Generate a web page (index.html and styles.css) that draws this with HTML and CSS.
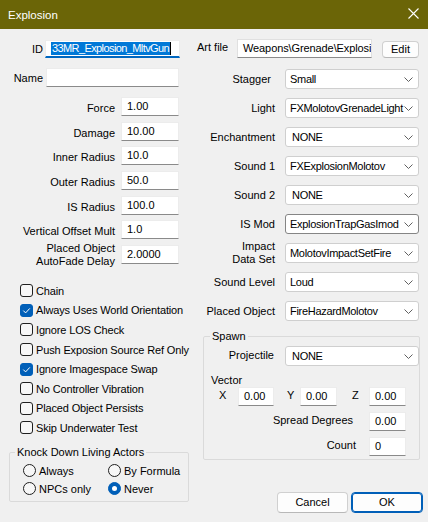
FILE: index.html
```html
<!DOCTYPE html>
<html>
<head>
<meta charset="utf-8">
<title>Explosion</title>
<link rel="stylesheet" href="styles.css">
</head>
<body>
<div class="window">
  <div class="titlebar">
    <span class="title">Explosion</span>
    <svg class="close" width="11" height="11" viewBox="0 0 11 11"><path d="M0.5 0.5 L10.5 10.5 M10.5 0.5 L0.5 10.5" stroke="#ffffff" stroke-width="1.1" fill="none"/></svg>
  </div>
  <div class="content">
    <div class="left">
      <div class="idrow">
        <span class="id-lbl">ID</span>
        <div class="tb tb-id"><span class="sel">33MR_Explosion_MltvGun</span><span class="caret"></span></div>
      </div>
      <div class="namerow">
        <span class="name-lbl">Name</span>
        <div class="tb tb-name"></div>
      </div>
      <div class="nums">
        <div class="nrow"><span class="nlbl">Force</span><div class="tb tb-num">1.00</div></div>
        <div class="nrow"><span class="nlbl">Damage</span><div class="tb tb-num">10.00</div></div>
        <div class="nrow"><span class="nlbl">Inner Radius</span><div class="tb tb-num">10.0</div></div>
        <div class="nrow"><span class="nlbl">Outer Radius</span><div class="tb tb-num">50.0</div></div>
        <div class="nrow"><span class="nlbl">IS Radius</span><div class="tb tb-num">100.0</div></div>
        <div class="nrow"><span class="nlbl">Vertical Offset Mult</span><div class="tb tb-num">1.0</div></div>
        <div class="nrow"><span class="nlbl two">Placed Object<br>AutoFade Delay</span><div class="tb tb-num">2.0000</div></div>
      </div>
      <div class="checks">
        <div class="chk"><span class="box"></span><span>Chain</span></div>
        <div class="chk"><span class="box on"><svg width="13" height="13" viewBox="0 0 13 13"><path d="M3.3 6.6 L5.6 8.9 L9.8 4.4" stroke="#fff" stroke-width="1" fill="none"/></svg></span><span>Always Uses World Orientation</span></div>
        <div class="chk"><span class="box"></span><span>Ignore LOS Check</span></div>
        <div class="chk"><span class="box"></span><span>Push Exposion Source Ref Only</span></div>
        <div class="chk"><span class="box on"><svg width="13" height="13" viewBox="0 0 13 13"><path d="M3.3 6.6 L5.6 8.9 L9.8 4.4" stroke="#fff" stroke-width="1" fill="none"/></svg></span><span>Ignore Imagespace Swap</span></div>
        <div class="chk"><span class="box"></span><span>No Controller Vibration</span></div>
        <div class="chk"><span class="box"></span><span>Placed Object Persists</span></div>
        <div class="chk"><span class="box"></span><span>Skip Underwater Test</span></div>
      </div>
      <fieldset class="grp knock">
        <legend>Knock Down Living Actors</legend>
        <div class="radios">
          <div class="rad"><span class="circ"></span><span>Always</span></div>
          <div class="rad"><span class="circ"></span><span>By Formula</span></div>
          <div class="rad"><span class="circ"></span><span>NPCs only</span></div>
          <div class="rad"><span class="circ on"></span><span>Never</span></div>
        </div>
      </fieldset>
    </div>
    <div class="right">
      <div class="artrow">
        <span class="art-lbl">Art file</span>
        <div class="tb tb-art">Weapons\Grenade\Explosion</div>
        <div class="btn btn-edit">Edit</div>
      </div>
      <div class="selects">
        <div class="srow"><span class="slbl stagger">Stagger</span><div class="dd"><span class="ddt">Small</span><svg class="chev" width="9" height="5" viewBox="0 0 9 5"><path d="M0.5 0.5 L4.5 4.5 L8.5 0.5" fill="none" stroke="#606060"/></svg></div></div>
        <div class="srow"><span class="slbl">Light</span><div class="dd"><span class="ddt">FXMolotovGrenadeLight</span><svg class="chev" width="9" height="5" viewBox="0 0 9 5"><path d="M0.5 0.5 L4.5 4.5 L8.5 0.5" fill="none" stroke="#606060"/></svg></div></div>
        <div class="srow"><span class="slbl">Enchantment</span><div class="dd"><span class="ddt pad">NONE</span><svg class="chev" width="9" height="5" viewBox="0 0 9 5"><path d="M0.5 0.5 L4.5 4.5 L8.5 0.5" fill="none" stroke="#606060"/></svg></div></div>
        <div class="srow"><span class="slbl">Sound 1</span><div class="dd"><span class="ddt">FXExplosionMolotov</span><svg class="chev" width="9" height="5" viewBox="0 0 9 5"><path d="M0.5 0.5 L4.5 4.5 L8.5 0.5" fill="none" stroke="#606060"/></svg></div></div>
        <div class="srow"><span class="slbl">Sound 2</span><div class="dd"><span class="ddt pad">NONE</span><svg class="chev" width="9" height="5" viewBox="0 0 9 5"><path d="M0.5 0.5 L4.5 4.5 L8.5 0.5" fill="none" stroke="#606060"/></svg></div></div>
        <div class="srow"><span class="slbl">IS Mod</span><div class="dd focus"><span class="ddt">ExplosionTrapGasImod</span><svg class="chev" width="9" height="5" viewBox="0 0 9 5"><path d="M0.5 0.5 L4.5 4.5 L8.5 0.5" fill="none" stroke="#606060"/></svg></div></div>
        <div class="srow"><span class="slbl two">Impact<br>Data Set</span><div class="dd"><span class="ddt">MolotovImpactSetFire</span><svg class="chev" width="9" height="5" viewBox="0 0 9 5"><path d="M0.5 0.5 L4.5 4.5 L8.5 0.5" fill="none" stroke="#606060"/></svg></div></div>
        <div class="srow"><span class="slbl">Sound Level</span><div class="dd"><span class="ddt">Loud</span><svg class="chev" width="9" height="5" viewBox="0 0 9 5"><path d="M0.5 0.5 L4.5 4.5 L8.5 0.5" fill="none" stroke="#606060"/></svg></div></div>
        <div class="srow"><span class="slbl">Placed Object</span><div class="dd"><span class="ddt">FireHazardMolotov</span><svg class="chev" width="9" height="5" viewBox="0 0 9 5"><path d="M0.5 0.5 L4.5 4.5 L8.5 0.5" fill="none" stroke="#606060"/></svg></div></div>
      </div>
      <fieldset class="grp spawn">
        <legend>Spawn</legend>
        <div class="prow"><span class="plbl">Projectile</span><div class="dd"><span class="ddt pad">NONE</span><svg class="chev" width="9" height="5" viewBox="0 0 9 5"><path d="M0.5 0.5 L4.5 4.5 L8.5 0.5" fill="none" stroke="#606060"/></svg></div></div>
        <div class="vlbl">Vector</div>
        <div class="xyz">
          <span class="ax ax-x">X</span><div class="tb tb-x">0.00</div>
          <span class="ax ax-y">Y</span><div class="tb tb-v">0.00</div>
          <span class="ax ax-z">Z</span><div class="tb tb-v">0.00</div>
        </div>
        <div class="frow spread"><span>Spread Degrees</span><div class="tb tb-v">0.00</div></div>
        <div class="frow count"><span>Count</span><div class="tb tb-v">0</div></div>
      </fieldset>
      <div class="buttons">
        <div class="btn btn-cancel">Cancel</div>
        <div class="btn btn-ok">OK</div>
      </div>
    </div>
  </div>
</div>
</body>
</html>
```
FILE: styles.css
```css
html, body {
  margin: 0;
  padding: 0;
}
body {
  width: 428px;
  height: 522px;
  overflow: hidden;
  background: #f0f0f0;
  font-family: "Liberation Sans", Arial, sans-serif;
  font-size: 11px;
  color: #000;
}
.window {
  width: 428px;
  height: 522px;
  background: #f0f0f0;
}
.titlebar {
  height: 29px;
  background: #6b6507;
  display: flex;
  align-items: center;
  justify-content: space-between;
  padding: 0 4px 0 8px;
  box-sizing: border-box;
}
.title {
  color: #fff;
  font-size: 11.5px;
}
.close {
  margin-right: 5px;
  margin-top: -2px;
}
.content {
  display: flex;
}
.left {
  width: 190px;
  padding-top: 11px;
}
.right {
  width: 238px;
  padding-top: 10px;
}
.tb {
  box-sizing: border-box;
  background: #fff;
  border: 1px solid #ececec;
  border-bottom-color: #8a8a8a;
  height: 19px;
  line-height: 17px;
  padding-left: 5px;
  white-space: nowrap;
  overflow: hidden;
}
.idrow {
  display: flex;
  align-items: center;
  height: 18px;
}
.id-lbl {
  width: 43px;
  text-align: right;
  margin-right: 2px;
}
.tb-id {
  width: 135px;
  height: 18px;
  line-height: 16px;
  border-bottom: 2px solid #0067c0;
  padding-left: 5px;
  display: flex;
  align-items: center;
}
.sel {
  background: #0078d7;
  color: #fff;
  line-height: 13px;
  padding: 0 1px;
  letter-spacing: -0.6px;
}
.caret {
  width: 1px;
  height: 13px;
  background: #000;
}
.namerow {
  display: flex;
  align-items: center;
  margin-top: 10px;
  height: 19px;
}
.name-lbl {
  width: 43px;
  text-align: right;
  margin-right: 3px;
}
.tb-name {
  width: 133px;
}
.nums {
  margin-top: 10px;
  display: grid;
  grid-auto-rows: 19px;
  row-gap: 5.67px;
}
.nrow {
  display: flex;
  align-items: center;
}
.nlbl {
  width: 115px;
  text-align: right;
  margin-right: 6px;
  padding-top: 3px;
}
.nlbl.two {
  line-height: 12.5px;
  padding-top: 1px;
}
.tb-num {
  width: 58px;
}
.checks {
  margin-top: 17px;
  padding-left: 20px;
  letter-spacing: -0.15px;
}
.chk {
  display: flex;
  align-items: center;
  height: 19.6px;
  white-space: nowrap;
}
.box {
  box-sizing: border-box;
  flex: none;
  width: 13px;
  height: 13px;
  border: 1px solid #1f1f1f;
  border-radius: 3px;
  background: #f7f7f7;
  margin-right: 3px;
  display: flex;
}
.box svg {
  margin: -1px;
}
.box.on {
  background: #005fb8;
  border-color: #005fb8;
}
.grp {
  margin: 0;
  padding: 0;
  border: 1px solid #dadada;
  border-radius: 2px;
  min-width: 0;
}
.grp legend {
  padding: 0 2px;
  line-height: 13px;
}
.knock {
  margin-top: 8px;
  margin-left: 9px;
  width: 180px;
  box-sizing: border-box;
  padding-bottom: 3px;
}
.knock legend {
  margin-left: 5px;
}
.radios {
  display: grid;
  grid-template-columns: 85px 1fr;
  grid-auto-rows: 18px;
  margin-top: 3px;
  padding-left: 13px;
}
.rad {
  display: flex;
  align-items: center;
}
.circ {
  box-sizing: border-box;
  width: 13px;
  height: 13px;
  border: 1px solid #1f1f1f;
  border-radius: 50%;
  background: #f7f7f7;
  margin-right: 3px;
  display: flex;
  align-items: center;
  justify-content: center;
}
.circ.on {
  background: #005fb8;
  border-color: #005fb8;
}
.circ.on::after {
  content: "";
  width: 5px;
  height: 5px;
  border-radius: 50%;
  background: #fff;
}
.artrow {
  display: flex;
  align-items: center;
  height: 19px;
  padding-left: 7px;
}
.art-lbl {
  width: 40px;
  margin-top: -3px;
}
.tb-art {
  width: 135px;
  border-color: #e0e0e0;
  border-bottom-color: #8a8a8a;
  letter-spacing: -0.1px;
}
.btn {
  box-sizing: border-box;
  background: #fdfdfd;
  border: 1px solid #d0d0d0;
  border-bottom-color: #b8b8b8;
  border-radius: 4px;
  text-align: center;
}
.btn-edit {
  width: 37px;
  height: 17px;
  line-height: 15px;
  margin-left: 10px;
  margin-top: 2px;
}
.selects {
  margin-top: 11px;
  display: flex;
  flex-direction: column;
  gap: 9px;
}
.srow {
  display: flex;
  align-items: center;
  height: 20px;
}
.slbl {
  width: 85px;
  text-align: right;
  margin-right: 10px;
}
.slbl.stagger {
  padding-right: 4px;
  width: 81px;
}
.slbl.two {
  line-height: 13px;
}
.dd {
  box-sizing: border-box;
  width: 134px;
  height: 20px;
  background: #fff;
  border: 1px solid #cfcfcf;
  border-radius: 3px;
  display: flex;
  align-items: center;
  position: relative;
}
.dd.focus {
  border-color: #858585;
}
.ddt {
  flex: 1;
  padding-left: 4px;
  white-space: nowrap;
  overflow: hidden;
  margin-right: 13px;
  letter-spacing: -0.3px;
}
.ddt.pad {
  padding-left: 6px;
}
.chev {
  position: absolute;
  right: 5px;
  top: 7px;
}
.spawn {
  margin-top: 9px;
  margin-left: 13px;
  width: 217px;
  box-sizing: border-box;
  padding-bottom: 3px;
}
.spawn legend {
  margin-left: 6px;
}
.prow {
  display: flex;
  align-items: center;
  margin-top: 3px;
}
.plbl {
  width: 70px;
  text-align: right;
  margin-right: 11px;
  margin-top: -3px;
}
.vlbl {
  margin-top: 8px;
  padding-left: 7px;
  line-height: 12px;
}
.xyz {
  display: flex;
  align-items: center;
  margin-top: 1px;
  padding-left: 15px;
}
.ax {
  box-sizing: border-box;
  margin-top: -4px;
}
.ax-x {
  width: 19px;
}
.ax-y {
  width: 26px;
  padding-left: 13px;
}
.ax-z {
  width: 32px;
  padding-left: 15px;
}
.tb-x {
  width: 36px;
}
.tb-v {
  width: 37px;
}
.frow {
  display: flex;
  align-items: center;
  justify-content: flex-end;
  padding-right: 13px;
  margin-top: 6px;
}
.frow span {
  margin-top: -4px;
}
.spread span {
  margin-right: 16px;
}
.count span {
  margin-right: 13px;
}
.buttons {
  display: flex;
  justify-content: flex-end;
  gap: 3px;
  padding-right: 5px;
  margin-top: 32px;
}
.btn-cancel, .btn-ok {
  height: 21px;
  line-height: 19px;
}
.btn-cancel {
  width: 71px;
}
.btn-ok {
  width: 72px;
  border: 1px solid #005fb8;
  box-shadow: inset 0 0 0 1px #005fb8;
}
```
